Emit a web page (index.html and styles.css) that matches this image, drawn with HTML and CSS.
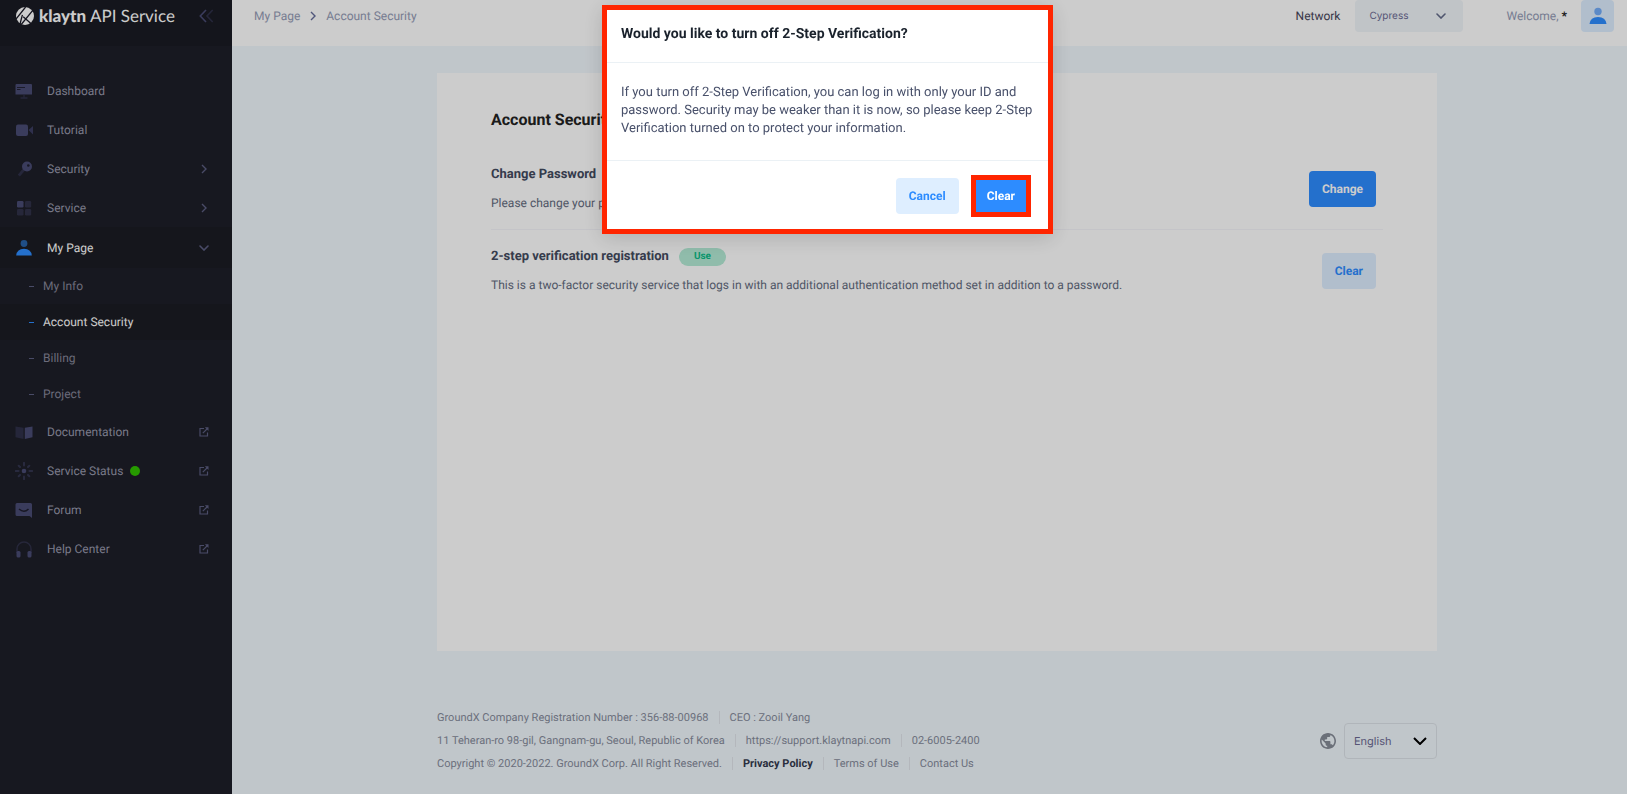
FILE: index.html
```
<!DOCTYPE html>
<html lang="en">
<head>
<meta charset="UTF-8">
<title>Account Security</title>
<link rel="stylesheet" href="styles.css">
</head>
<body>
<svg class="defs" width="0" height="0">
  <symbol id="ext" viewBox="0 0 10 10"><path d="M5 1.5H1v7.5h7.500V5.500M3.800 6.200L8 2" fill="none" stroke="currentColor" stroke-width="1.200"/><path d="M5.800 .3h3.700V4z" fill="currentColor"/></symbol>
  <symbol id="right" viewBox="0 0 6 10"><path d="M1 1l4 4-4 4" fill="none" stroke="currentColor" stroke-width="1.400"/></symbol>
  <symbol id="down" viewBox="0 0 10 6"><path d="M1 1l4 4 4-4" fill="none" stroke="currentColor" stroke-width="1.600" stroke-linecap="round"/></symbol>
</svg>

<div class="page">
<aside class="aside">
  <div class="brand">
    <a class="logo" href="#">
      <svg width="18" height="18" viewBox="0 0 18 18"><circle cx="9" cy="9" r="9" fill="#fff"/><path d="M9.600 0L0 12M5.200 17.500L17 3.200M6.400 7.800L4 17M7.200 9.800L15.500 17" fill="none" stroke="#1a1a27" stroke-width="1.300"/></svg>
      <span class="logo-text"><b>klaytn</b> API Service</span>
    </a>
    <button class="toggle" type="button" aria-label="Toggle menu"><svg width="15" height="14" viewBox="0 0 15 14" fill="none" stroke-width="1.600"><path d="M7 1L1.300 7 7 13" stroke="#494b74"/><path d="M13.700 1L8 7l5.700 6" stroke="#2f3049"/></svg></button>
  </div>
  <nav>
    <ul class="menu">
      <li><a class="item" href="#"><svg class="icon" viewBox="0 0 18 18"><path fill="#494b74" d="M1.500 2h14.500q1 0 1 1v9.500H.5V3q0-1 1-1z"/><path d="M2 5.500h8M2 7.500h3.500" stroke="#1e1e2d" stroke-width=".9"/><path d="M9 13v2.500M5.500 16h7" stroke="#2f3049" stroke-width="1.300"/></svg><span>Dashboard</span></a></li>
      <li><a class="item" href="#"><svg class="icon" viewBox="0 0 18 18"><rect x="1" y="3.500" width="12" height="11.500" rx="2" fill="#494b74"/><path d="M13.500 9L18 5v8.500z" fill="#3b3d61"/></svg><span>Tutorial</span></a></li>
      <li><a class="item" href="#"><svg class="icon" viewBox="0 0 18 18"><path d="M9 9.500l-5.200 6.200" stroke="#2f3049" stroke-width="2.800"/><circle cx="12" cy="6.500" r="5" fill="#494b74"/><circle cx="13.300" cy="5.500" r="1.300" fill="#1e1e2d"/></svg><span>Security</span><svg class="arrow" width="6" height="10"><use href="#right"/></svg></a></li>
      <li><a class="item" href="#"><svg class="icon" viewBox="0 0 18 18" fill="#303149"><rect x="2" y="2" width="6.500" height="6.500" rx="1.200" fill="#494b74"/><rect x="10" y="2" width="6.200" height="6.500" rx="1.200"/><rect x="2" y="10" width="6.500" height="6.500" rx="1.200"/><rect x="10" y="10" width="6.200" height="6.500" rx="1.200"/></svg><span>Service</span><svg class="arrow" width="6" height="10"><use href="#right"/></svg></a></li>
      <li><a class="item open" href="#"><svg class="icon" viewBox="0 0 18 18"><circle cx="9" cy="4.500" r="3.400" fill="#2762a8"/><path d="M1.200 16.500q.8-6.700 7.800-6.700t7.800 6.700z" fill="#2d8cff"/></svg><span>My Page</span><svg class="arrow" width="10" height="6"><use href="#down"/></svg></a>
        <ul class="submenu">
          <li><a href="#">My Info</a></li>
          <li><a class="active" href="#">Account Security</a></li>
          <li><a href="#">Billing</a></li>
          <li><a href="#">Project</a></li>
        </ul>
      </li>
      <li><a class="item" href="#"><svg class="icon" viewBox="0 0 18 18"><path d="M.5 3.500l8 1.300V16l-8-1.800z" fill="#2f3049"/><path d="M9.800 4.800l7.700-1.300v10.700L9.800 16z" fill="#494b74"/></svg><span>Documentation</span><svg class="ext" width="10" height="10"><use href="#ext"/></svg></a></li>
      <li><a class="item" href="#"><svg class="icon" viewBox="0 0 18 18"><circle cx="9" cy="9" r="2.300" fill="#494b74"/><path d="M9 .8v2.800M9 14.400v2.800M.8 9h2.800M14.400 9h2.800M3.700 3.700l1.300 1.300M13 13l1.300 1.300M3.700 14.300L5 13M13 5l1.300-1.300" stroke="#33354f" stroke-width="2" stroke-linecap="round"/></svg><span>Service Status</span><i class="dot"></i><svg class="ext" width="10" height="10"><use href="#ext"/></svg></a></li>
      <li><a class="item" href="#"><svg class="icon" viewBox="0 0 18 18"><path d="M2 2h13.500q1.500 0 1.500 1.500V17l-2.500-2H2Q.5 15 .5 13.500v-10Q.5 2 2 2z" fill="#494b74"/><path d="M4 8q5 4.500 9.500 0" fill="none" stroke="#1e1e2d" stroke-width="1.500"/></svg><span>Forum</span><svg class="ext" width="10" height="10"><use href="#ext"/></svg></a></li>
      <li><a class="item" href="#"><svg class="icon" viewBox="0 0 18 18"><path d="M2 13V9a7 7 0 0 1 14 0v4" fill="none" stroke="#303149" stroke-width="1.500"/><rect x="1.500" y="11" width="4" height="6.500" rx="1.500" fill="#494b74"/><rect x="12.500" y="11" width="4" height="6.500" rx="1.500" fill="#494b74"/></svg><span>Help Center</span><svg class="ext" width="10" height="10"><use href="#ext"/></svg></a></li>
    </ul>
  </nav>
</aside>

<div class="wrapper">
  <header class="header">
    <nav class="breadcrumb">
      <a href="#">My Page</a>
      <svg width="6" height="10"><use href="#right"/></svg>
      <a href="#">Account Security</a>
    </nav>
    <div class="topbar">
      <label for="network">Network</label>
      <div class="select network">
        <select id="network"><option>Cypress</option></select>
        <svg width="10" height="6"><use href="#down"/></svg>
      </div>
      <span class="welcome">Welcome, <b>*</b></span>
      <button class="avatar" type="button" aria-label="Profile"><svg width="18" height="18" viewBox="0 0 18 18"><circle cx="9" cy="4.500" r="3.700" fill="#73adf9"/><path d="M.5 17q.8-7 8.500-7t8.500 7z" fill="#2d8cff"/></svg></button>
    </div>
  </header>

  <main class="content">
    <section class="card">
      <h1>Account Security</h1>
      <div class="row">
        <div>
          <h2>Change Password</h2>
          <p>Please change your password regularly.</p>
        </div>
        <button class="btn btn-primary" type="button">Change</button>
      </div>
      <div class="row">
        <div>
          <h2>2-step verification registration <span class="badge">Use</span></h2>
          <p>This is a two-factor security service that logs in with an additional authentication method set in addition to a password.</p>
        </div>
        <button class="btn btn-light" type="button">Clear</button>
      </div>
    </section>

    <footer class="footer">
      <div class="info">
        <div class="line"><span>GroundX Company Registration Number : 356-88-00968</span><span>CEO : Zooil Yang</span></div>
        <div class="line"><span>11 Teheran-ro 98-gil, Gangnam-gu, Seoul, Republic of Korea</span><a href="#">https://support.klaytnapi.com</a><span>02-6005-2400</span></div>
        <div class="line"><span>Copyright © 2020-2022. GroundX Corp. All Right Reserved.</span><a class="privacy" href="#">Privacy Policy</a><a href="#">Terms of Use</a><a href="#">Contact Us</a></div>
      </div>
      <div class="lang">
        <svg width="16" height="16" viewBox="2 2 20 20"><path fill="#868c98" d="M12 2C6.480 2 2 6.480 2 12s4.480 10 10 10 10-4.480 10-10S17.520 2 12 2zm-1 17.930c-3.950-.49-7-3.850-7-7.930 0-.62.080-1.210.21-1.790L9 15v1c0 1.100.9 2 2 2v1.930zm6.900-2.540c-.26-.81-1-1.390-1.900-1.390h-1v-3c0-.55-.45-1-1-1H8v-2h2c.55 0 1-.45 1-1V7h2c1.100 0 2-.9 2-2v-.41c2.930 1.190 5 4.060 5 7.410 0 2.080-.8 3.970-2.100 5.390z"/></svg>
        <div class="select language">
          <select id="language" aria-label="Language"><option>English</option></select>
          <svg width="14" height="8" viewBox="0 0 14 8"><path d="M1 1l6 6 6-6" fill="none" stroke="#000" stroke-width="2"/></svg>
        </div>
      </div>
    </footer>
  </main>
</div>
</div>

<div class="overlay">
  <div class="modal" role="dialog" aria-labelledby="modal-title">
    <div class="modal-header" id="modal-title">Would you like to turn off 2-Step Verification?</div>
    <div class="modal-body">If you turn off 2-Step Verification, you can log in with only your ID and password. Security may be weaker than it is now, so please keep 2-Step Verification turned on to protect your information.</div>
    <div class="modal-footer">
      <button class="btn btn-light" type="button">Cancel</button>
      <button class="btn btn-primary marked" type="button">Clear</button>
    </div>
  </div>
</div>
</body>
</html>
```
FILE: styles.css
```
*{box-sizing:border-box}
body{margin:0;font-family:Roboto,sans-serif;font-size:12px;color:#48465b;background:#f1f8fd;text-rendering:geometricPrecision}
a{color:inherit;text-decoration:none}
ul{list-style:none;margin:0;padding:0}
h1,h2,p{margin:0}
button,select{font-family:inherit;text-rendering:inherit;border:0;cursor:pointer}
.defs{position:absolute}
.page{display:flex;min-height:100vh}

/* sidebar */
.aside{width:232px;flex:none;background:#1d1e28}
.brand{height:46px;padding:0 18px 14px 16px;background:#1a1b23;display:flex;align-items:center;justify-content:space-between}
.logo{display:flex;align-items:center;gap:5px;color:#fff}
.logo-text{font-family:Lato,sans-serif;font-size:17px;line-height:20px;white-space:nowrap}
.logo-text b{font-weight:900}
.toggle{background:none;padding:0;display:flex}
.menu{padding-top:25px}
.item{display:flex;align-items:center;height:39px;padding:0 23px 0 15px;color:#9899ac}
.icon{width:18px;height:18px;margin-right:14px}
.arrow,.ext{margin-left:auto;color:#5c5e81}
.arrow{margin-right:2px}
.item.open{height:41px;background:#1b1c23;color:#fff}
.item.open .arrow{margin-right:0}
.dot{width:10px;height:10px;margin-left:7px;border-radius:50%;background:#30c100}
.submenu a{display:flex;align-items:center;height:36px;padding-left:29px;color:#868699}
.submenu a:before{content:"";width:5px;height:1px;margin-right:9px;background:#5c5e81}
.submenu .active{background:#1b1c23;color:#fff}
.submenu .active:before{background:#2d8cff}

/* header */
.wrapper{flex:1;min-width:0}
.header{height:46px;padding:0 13px 14px 22px;background:#fff;display:flex;align-items:center;justify-content:space-between}
.breadcrumb{display:flex;align-items:center;gap:10px;color:#959cb6}
.breadcrumb svg{color:#646c9a}
.topbar{display:flex;align-items:center}
.select{position:relative}
.select select{appearance:none;width:100%;height:100%;background:none;font-family:Inter,sans-serif;color:#6c6a93}
.select svg{position:absolute;top:0;bottom:0;margin:auto;pointer-events:none}
.network{width:108px;height:32px;margin:0 43px 0 15px;background:#f0f5f9;border-radius:4px}
.network select{padding:0 14px;font-size:10px}
.network svg{right:17px;color:#646c8a}
.welcome{color:#959cb6}
.welcome b{color:#222}
.avatar{width:33px;height:32px;margin-left:14px;padding:0;border-radius:4px;background:#deeeff;display:flex;align-items:center;justify-content:center}

/* content */
.content{padding:27px 17px 0 32px}
.card,.footer{max-width:1000px;margin:0 auto}
.card{min-height:578px;padding:37px 54px 54px;background:#fff}
.card h1{font-size:16px;line-height:20px;color:#222}
.row{display:flex;align-items:center;justify-content:space-between;height:82px;padding-right:7px}
.card h1+.row{margin-top:18px;border-bottom:1px solid #f5f5fa}
.row h2{display:flex;align-items:center;gap:10px;font-size:13px;line-height:18px;margin-bottom:10px;color:#434a5e}
.row p{line-height:18px;color:#646c80}
.badge{padding:0 15px;border-radius:9px;background:#b4ebd6;color:#0abb87;font-size:10px}
.btn{height:36px;padding:0 13px;border-radius:4px;font-size:12px;font-weight:700}
.btn-primary{background:#2d8cff;color:#fff}
.btn-light{background:#deeeff;color:#2d8cff}

/* footer */
.footer{display:flex;align-items:center;justify-content:space-between;padding-top:55px;font-size:11px;color:#868c9c}
.line{display:flex;align-items:center;height:23px}
.line>*+*{margin-left:10px;padding-left:10px;border-left:1px solid #e2e5ec}
.privacy{font-weight:700;color:#343a4e}
.lang{display:flex;align-items:center;gap:8px}
.language{width:93px;height:36px;border:1px solid #dde3e9;border-radius:4px}
.language select{padding:0 9px;font-size:11px}
.language svg{right:9px}

/* modal */
.overlay{position:fixed;inset:0;padding:5px 0 0 28px;background:rgba(0,0,0,.2);display:flex;justify-content:center;align-items:flex-start}
.modal{width:451px;border:5px solid #ff2500;background:#fff;box-shadow:0 4px 20px rgba(0,0,0,.15)}
.modal-header{padding:14px 14px 18px;border-bottom:1px solid #ebf1f5;font-size:14px;line-height:20px;font-weight:700;color:#1a222c}
.modal-body{padding:21px 14px 22px;border-bottom:1px solid #ebf1f5;font-size:13px;line-height:18px;color:#48506a}
.modal-footer{display:flex;align-items:center;justify-content:flex-end;gap:12px;height:68px;padding:2px 17px 0 14px}
.marked{height:42px;padding:0 11px;border:5px solid #ff2500;border-radius:0}
```
